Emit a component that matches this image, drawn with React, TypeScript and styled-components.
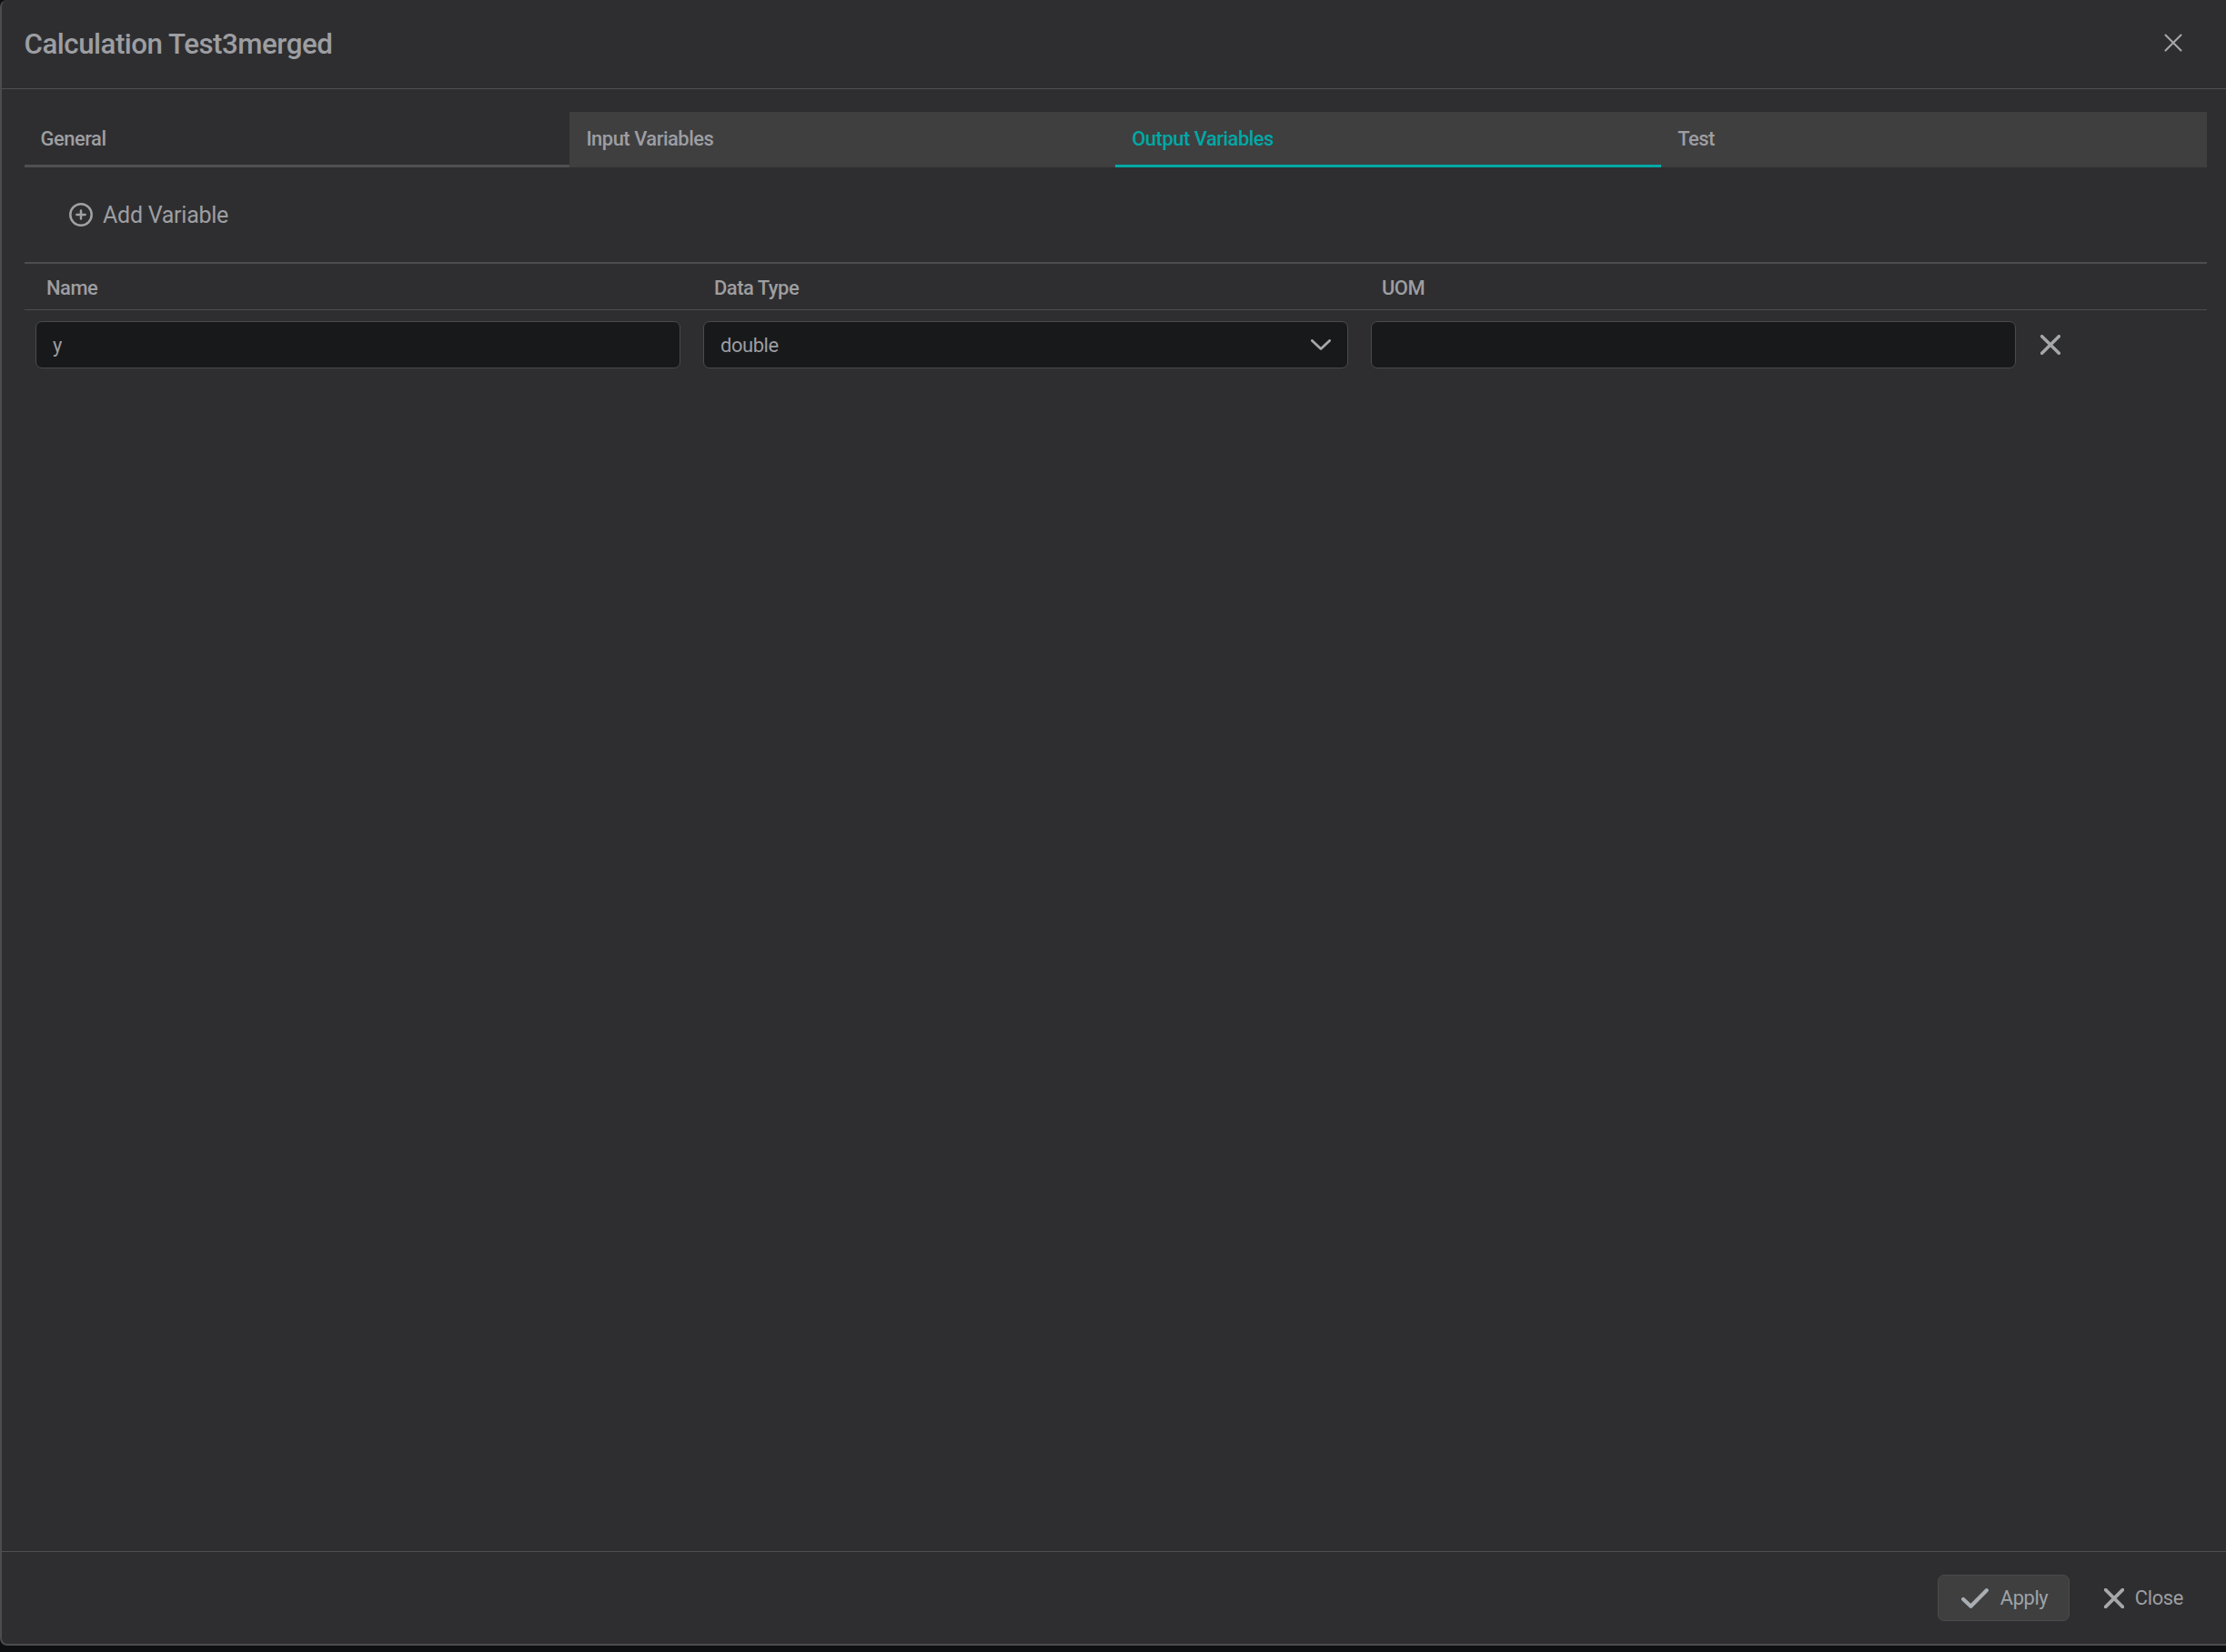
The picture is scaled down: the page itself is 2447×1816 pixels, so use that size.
import styled, { createGlobalStyle } from "styled-components";

const GlobalStyle = createGlobalStyle`
  html, body {
    margin: 0;
    padding: 0;
    background: #0e0f11;
  }
  body {
    font-family: Roboto, "Liberation Sans", sans-serif;
  }
`;

const Dialog = styled.div`
  box-sizing: border-box;
  display: flex;
  flex-direction: column;
  width: 2447px;
  height: 1809px;
  background: #2e2e30;
  color: #9d9ea2;
  border-left: 2px solid #4c4c4e;
  border-bottom: 2px solid #4c4c4e;
  border-radius: 8px 0 0 8px;
`;

const Header = styled.header`
  box-sizing: border-box;
  display: flex;
  align-items: center;
  justify-content: space-between;
  height: 98px;
  padding: 0 48.5px 0 24.5px;
  border-bottom: 1px solid #4f4f51;
`;

const Title = styled.h1`
  margin: 0;
  font-size: 31.25px;
  font-weight: 500;
  letter-spacing: -0.47px;
  color: #9d9ea2;
`;

const IconButton = styled.button`
  display: flex;
  padding: 0;
  border: 0;
  background: none;
  color: #9d9ea2;
`;

const HeaderClose = styled(IconButton)`
  margin-bottom: 4px;
`;

const Body = styled.div`
  flex: 1;
  padding: 25px 21px 0 24.5px;
`;

const Tabs = styled.div`
  display: grid;
  grid-template-columns: repeat(4, 1fr);
`;

const Tab = styled.div<{ $active?: boolean; $first?: boolean }>`
  box-sizing: border-box;
  height: 61px;
  padding: 17px 18px 0;
  font-size: 21.9px;
  font-weight: 500;
  letter-spacing: -0.47px;
  background: ${({ $first }) => ($first ? "transparent" : "#3f3f40")};
  color: ${({ $active }) => ($active ? "#00a8a5" : "#9d9ea2")};
  border-bottom: 3px solid
    ${({ $active, $first }) =>
      $active ? "#00a8a5" : $first ? "#505052" : "transparent"};
`;

const AddRow = styled.div`
  display: flex;
  align-items: center;
  gap: 11px;
  height: 104px;
  padding: 0 0 0 49.5px;
  box-sizing: border-box;
  font-size: 25px;
  letter-spacing: -0.26px;
  color: #9d9ea2;
`;

const Table = styled.div`
  border-top: 2px solid #4d4d4f;
`;

const HeadRow = styled.div`
  display: grid;
  grid-template-columns: repeat(3, 708.6px);
  column-gap: 25.4px;
  align-items: center;
  box-sizing: border-box;
  height: 51px;
  padding: 2px 0 0 24.5px;
  border-bottom: 1px solid #4d4d4f;
  font-size: 21.9px;
  font-weight: 500;
  letter-spacing: -0.47px;
`;

const DataRow = styled.div`
  display: flex;
  align-items: center;
  padding: 12px 0 0 12.5px;
`;

const Fields = styled.div`
  display: grid;
  grid-template-columns: repeat(3, 709.2px);
  column-gap: 24.8px;
`;

const Field = styled.div`
  box-sizing: border-box;
  display: flex;
  align-items: center;
  justify-content: space-between;
  height: 52px;
  padding: 0 18px;
  background: #18191b;
  border: 1.5px solid #4a4a4c;
  border-radius: 7px;
  font-size: 21.9px;
  letter-spacing: -0.4px;
  color: #9d9ea2;
`;

const DeleteButton = styled(IconButton)`
  margin-left: 27px;
`;

const Footer = styled.footer`
  box-sizing: border-box;
  display: flex;
  align-items: center;
  justify-content: flex-end;
  height: 102px;
  padding: 0 47px 0 0;
  border-top: 1px solid #4f4f51;
`;

const ApplyButton = styled.button`
  box-sizing: border-box;
  display: flex;
  align-items: center;
  gap: 12.5px;
  width: 145px;
  height: 51px;
  padding: 0 0 0 25px;
  background: #3f3f40;
  border: 1px solid #4a4a4c;
  border-radius: 7px;
  font-family: inherit;
  font-size: 21.9px;
  letter-spacing: -0.4px;
  color: #9fa3a8;
`;

const CloseButton = styled.button`
  display: flex;
  align-items: center;
  gap: 11.5px;
  margin-left: 38px;
  padding: 0;
  background: none;
  border: 0;
  font-family: inherit;
  font-size: 21.9px;
  letter-spacing: -0.35px;
  color: #9d9ea2;
`;

const Cross = ({ size, stroke }: { size: number; stroke: number }) => (
  <svg width={size} height={size} viewBox="0 0 20 20" fill="none">
    <path
      d="M1.5 1.5L18.5 18.5M18.5 1.5L1.5 18.5"
      stroke="#a6a7aa"
      strokeWidth={stroke}
      strokeLinecap="round"
    />
  </svg>
);

const PlusCircle = () => (
  <svg width="26" height="26" viewBox="0 0 26 26" fill="none" stroke="#a0a1a4" strokeWidth="2.5">
    <circle cx="13" cy="13" r="11.7" />
    <path d="M13 8.4V17.6M8.4 13H17.6" strokeLinecap="round" />
  </svg>
);

const Chevron = () => (
  <svg width="22" height="12" viewBox="0 0 22 12" fill="none">
    <path
      d="M1.4 1.4L11 10.4L20.6 1.4"
      stroke="#a6a7aa"
      strokeWidth="2.8"
      strokeLinecap="round"
      strokeLinejoin="round"
    />
  </svg>
);

const Check = () => (
  <svg width="30" height="22" viewBox="0 0 30 22" fill="none">
    <path
      d="M2.2 12L10.5 19.8L27.8 2.2"
      stroke="#a9aeb3"
      strokeWidth="4.2"
      strokeLinecap="round"
      strokeLinejoin="round"
    />
  </svg>
);

const App = () => {
  return (
    <>
      <GlobalStyle />
      <Dialog>
        <Header>
          <Title>Calculation Test3merged</Title>
          <HeaderClose aria-label="Close dialog">
            <Cross size={20} stroke={2.1} />
          </HeaderClose>
        </Header>
        <Body>
          <Tabs>
            <Tab $first>General</Tab>
            <Tab>Input Variables</Tab>
            <Tab $active>Output Variables</Tab>
            <Tab>Test</Tab>
          </Tabs>
          <AddRow>
            <PlusCircle />
            Add Variable
          </AddRow>
          <Table>
            <HeadRow>
              <span>Name</span>
              <span>Data Type</span>
              <span>UOM</span>
            </HeadRow>
            <DataRow>
              <Fields>
                <Field>y</Field>
                <Field>
                  double
                  <Chevron />
                </Field>
                <Field />
              </Fields>
              <DeleteButton aria-label="Remove variable">
                <Cross size={22} stroke={3.2} />
              </DeleteButton>
            </DataRow>
          </Table>
        </Body>
        <Footer>
          <ApplyButton>
            <Check />
            Apply
          </ApplyButton>
          <CloseButton>
            <Cross size={22} stroke={3.4} />
            Close
          </CloseButton>
        </Footer>
      </Dialog>
    </>
  );
};

export default App;
